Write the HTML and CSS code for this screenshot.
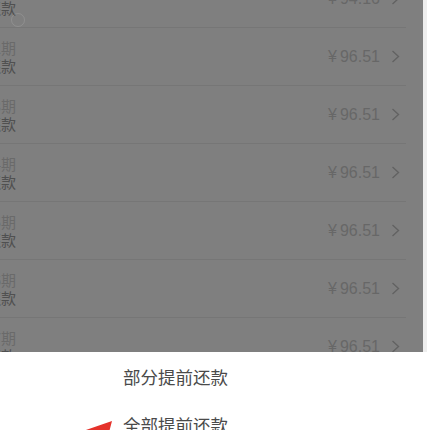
FILE: index.html
```html
<!DOCTYPE html>
<html lang="zh-CN">
<head>
    <meta charset="UTF-8">
    <meta name="viewport" content="width=device-width, initial-scale=1.0">
    <title>还款计划</title>
    <link rel="stylesheet" href="styles.css">
</head>
<body>
    <div class="page">
        <ul class="plan">
            <li class="plan-row">
                <div class="period"><span class="term">第1期</span><span class="state">待还款</span></div>
                <div class="money"><span class="yen">¥</span>94.16 <svg class="arrow" viewBox="0 0 8 13"><polyline points="1,1 7,6.5 1,12"/></svg></div>
            </li>
            <li class="plan-row">
                <div class="period"><span class="term">第2期</span><span class="state">待还款</span></div>
                <div class="money"><span class="yen">¥</span>96.51 <svg class="arrow" viewBox="0 0 8 13"><polyline points="1,1 7,6.5 1,12"/></svg></div>
            </li>
            <li class="plan-row">
                <div class="period"><span class="term">第3期</span><span class="state">待还款</span></div>
                <div class="money"><span class="yen">¥</span>96.51 <svg class="arrow" viewBox="0 0 8 13"><polyline points="1,1 7,6.5 1,12"/></svg></div>
            </li>
            <li class="plan-row">
                <div class="period"><span class="term">第4期</span><span class="state">待还款</span></div>
                <div class="money"><span class="yen">¥</span>96.51 <svg class="arrow" viewBox="0 0 8 13"><polyline points="1,1 7,6.5 1,12"/></svg></div>
            </li>
            <li class="plan-row">
                <div class="period"><span class="term">第5期</span><span class="state">待还款</span></div>
                <div class="money"><span class="yen">¥</span>96.51 <svg class="arrow" viewBox="0 0 8 13"><polyline points="1,1 7,6.5 1,12"/></svg></div>
            </li>
            <li class="plan-row">
                <div class="period"><span class="term">第6期</span><span class="state">待还款</span></div>
                <div class="money"><span class="yen">¥</span>96.51 <svg class="arrow" viewBox="0 0 8 13"><polyline points="1,1 7,6.5 1,12"/></svg></div>
            </li>
            <li class="plan-row">
                <div class="period"><span class="term">第7期</span><span class="state">待还款</span></div>
                <div class="money"><span class="yen">¥</span>96.51 <svg class="arrow" viewBox="0 0 8 13"><polyline points="1,1 7,6.5 1,12"/></svg></div>
            </li>
        </ul>
        <div class="mask"></div>
        <span class="mark"></span>

        <div class="sheet">
            <div class="sheet-item">部分提前还款</div>
            <div class="sheet-item">全部提前还款</div>
            <!-- 截图上的红色标注箭头 -->
            <svg class="pointer" viewBox="0 0 60 30">
                <polygon points="44,7 15,17 29,19 20,30 32,30 35,23 38,30"/>
            </svg>
        </div>
    </div>
</body>
</html>
```

FILE: styles.css
```css
* {
    box-sizing: border-box;
}
body {
    margin: 0;
    background-color: #eeeeee;
    font-family: "Liberation Sans", "Noto Sans CJK SC", sans-serif;
    overflow: hidden;
}
.page {
    position: relative;
    width: 427px;
    height: 430px;
    overflow: hidden;
}
.plan {
    list-style: none;
    width: 423px;
    margin: -30px 0 0 0;
    padding: 0;
    background: white;
}
.plan-row {
    height: 58px;
    display: flex;
    align-items: center;
    justify-content: space-between;
    border-bottom: 1px solid #ececec;
    margin-right: 17px;
    margin-left: -44px;
}
.period {
    width: 60px;
    display: flex;
    flex-direction: column;
    align-items: flex-end;
    font-size: 15px;
    line-height: 18px;
    font-family: "Noto Sans CJK SC", sans-serif;
}
.term {
    color: #d4d4d4;
}
.state {
    color: #a0a0a0;
}
.money {
    display: flex;
    align-items: center;
    font-size: 16px;
    color: #cfcfcf;
    margin-right: 6px;
}
.yen {
    margin-right: 3px;
}
.arrow {
    width: 9px;
    height: 13px;
    margin-left: 11px;
    fill: none;
    stroke: #c4c4c4;
    stroke-width: 1.4;
}
.mask {
    position: absolute;
    left: 0;
    top: 0;
    width: 423px;
    height: 352px;
    background: rgba(0, 0, 0, 0.5);
}
.mark {
    position: absolute;
    left: 11px;
    top: 13px;
    width: 14px;
    height: 14px;
    border: 1px solid rgba(255, 255, 255, 0.12);
    border-radius: 50%;
}
.sheet {
    position: absolute;
    left: 0;
    top: 352px;
    width: 427px;
    height: 120px;
    background: white;
}
.sheet-item {
    height: 48px;
    padding-left: 123px;
    display: flex;
    align-items: center;
    font-size: 17.5px;
    color: #4a4a4a;
    font-family: "Noto Sans CJK SC", sans-serif;
}
.pointer {
    position: absolute;
    left: 68px;
    top: 62px;
    width: 60px;
    height: 30px;
    fill: #e5322b;
}
```
